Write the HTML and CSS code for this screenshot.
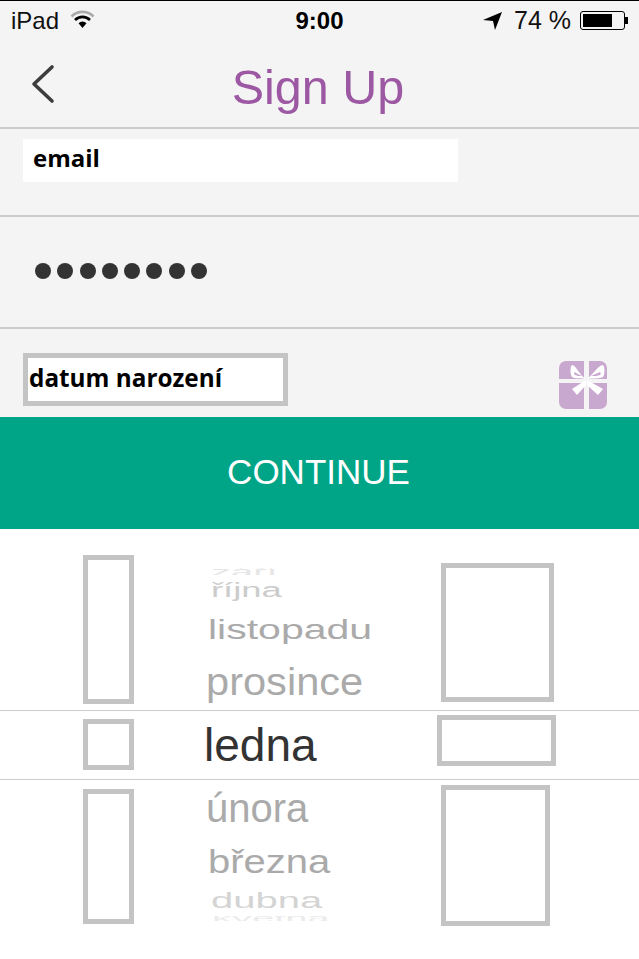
FILE: index.html
```html
<!DOCTYPE html>
<html lang="en">
<head>
  <meta charset="UTF-8">
  <meta name="viewport" content="width=device-width, initial-scale=1.0">
  <title>Sign Up</title>
  <link rel="stylesheet" href="styles.css">
</head>
<body>

  <div class="status-bar">
    <div class="status-left">
      <span>iPad</span>
      <svg class="wifi" width="25" height="19" viewBox="0 0 25 19">
        <path d="M1.5 6.5 A15.5 15.5 0 0 1 23.5 6.5" fill="none" stroke="#aaa" stroke-width="2.6"/>
        <path d="M5 10 A10.5 10.5 0 0 1 20 10" fill="none" stroke="#000" stroke-width="2.6"/>
        <path d="M8.5 13.2 A5.6 5.6 0 0 1 16.5 13.2 L12.5 18 Z" fill="#000"/>
      </svg>
    </div>
    <b class="status-time">9:00</b>
    <div class="status-right">
      <svg width="19" height="18" viewBox="0 0 19 18">
        <path d="M0 8 L19 0 L12 18 L10 9 Z" fill="#000"/>
      </svg>
      <span class="battery-text">74 %</span>
      <div class="battery"><div class="battery-fill"></div></div>
      <div class="battery-nub"></div>
    </div>
  </div>

  <header class="nav">
    <svg class="back" width="24" height="40" viewBox="0 0 24 40">
      <path d="M21 3 L3 20 L21 37" fill="none" stroke="#3d3d3d" stroke-width="3.6" stroke-linecap="round" stroke-linejoin="round"/>
    </svg>
    <h1>Sign Up</h1>
    <div></div>
  </header>

  <form>
    <div class="row row-email">
      <div class="field-email">email</div>
    </div>

    <div class="row row-password">
      <span class="dot"></span><span class="dot"></span><span class="dot"></span><span class="dot"></span>
      <span class="dot"></span><span class="dot"></span><span class="dot"></span><span class="dot"></span>
    </div>

    <div class="row-date">
      <div class="field-date">datum narození</div>
      <svg class="gift" width="48" height="48" viewBox="0 0 48 48">
        <rect width="48" height="48" rx="7" fill="#c9a8cf"/>
        <rect x="25" width="5" height="48" fill="#f4f4f4"/>
        <rect y="18" width="48" height="4" fill="#f4f4f4"/>
        <path d="M27 18 C21 15 17 4 13 4 C11 6 11 13 13 16 C16 18 22 17 27 18 Z M23 15 C20 14 18 12 15 11 C15 12 15 13 16 14 C18 15 20 15 23 15 Z" fill="#fff" fill-rule="evenodd"/>
        <path d="M28 18 C33 15 39 4 44 4 C46 6 46 13 44 16 C40 18 34 17 28 18 Z M32 15 C35 14 38 12 41 11 C42 12 42 13 41 14 C39 15 35 15 32 15 Z" fill="#fff" fill-rule="evenodd"/>
        <path d="M27 19 L13 28 L18 34 L27 24 Z M28 19 L44 28 L39 34 L28 24 Z" fill="#fff"/>
      </svg>
    </div>

    <button type="button" class="continue">CONTINUE</button>
  </form>

  <section class="picker">
    <div class="wheel wheel-top">
      <div class="box box-left"></div>
      <div class="months">
        <div class="month m-zari"><span>září</span></div>
        <div class="month m-rijna"><span>října</span></div>
        <div class="month m-listopadu"><span>listopadu</span></div>
        <div class="month m-prosince"><span>prosince</span></div>
      </div>
      <div class="box box-right"></div>
    </div>

    <div class="wheel wheel-mid">
      <div class="box box-left"></div>
      <div class="months">
        <div class="month m-ledna"><span>ledna</span></div>
      </div>
      <div class="box box-right"></div>
    </div>

    <div class="wheel wheel-bottom">
      <div class="box box-left"></div>
      <div class="months">
        <div class="month m-unora"><span>února</span></div>
        <div class="month m-brezna"><span>března</span></div>
        <div class="month m-dubna"><span>dubna</span></div>
        <div class="month m-kvetna"><span>května</span></div>
      </div>
      <div class="box box-right"></div>
    </div>
  </section>

</body>
</html>
```

FILE: styles.css
```css
body {
  margin: 0;
  height: 959px;
  overflow: hidden;
  background-color: #f4f4f4;
  font-family: "Liberation Sans", Arial, sans-serif;
}

.status-bar {
  box-sizing: border-box;
  height: 40px;
  padding: 0 11px;
  border-top: 1px solid #000;
  display: grid;
  grid-template-columns: 1fr auto 1fr;
  align-items: center;
  font-size: 24px;
  color: #111;
}

.status-left {
  display: flex;
  align-items: center;
  gap: 11px;
}

.wifi {
  margin-top: -3px;
}

.status-time {
  color: #000;
}

.status-right {
  display: flex;
  align-items: center;
  justify-content: flex-end;
}

.battery-text {
  margin: 0 9px 0 12px;
  font-size: 25px;
}

.battery {
  box-sizing: border-box;
  width: 45px;
  height: 19px;
  padding: 2px;
  border: 1px solid #000;
  border-radius: 3px;
}

.battery-fill {
  width: 29px;
  height: 100%;
  background-color: #000;
}

.battery-nub {
  width: 3px;
  height: 7px;
  background-color: #000;
}

.nav {
  box-sizing: border-box;
  height: 89px;
  padding: 0 0 0 31px;
  border-bottom: 2px solid #ccc;
  display: grid;
  grid-template-columns: 1fr auto 1fr;
  align-items: center;
}

.nav h1 {
  margin: 7px 0 0;
  font-weight: normal;
  font-size: 48.5px;
  color: #9c58a3;
  transform: translateX(-17px);
}

.row {
  box-sizing: border-box;
  border-bottom: 2px solid #ccc;
}

.row-email {
  height: 88px;
  padding: 10px 0 0 23px;
}

.field-email {
  box-sizing: border-box;
  width: 435px;
  height: 43px;
  padding-left: 10px;
  background-color: #fff;
  font-family: "Open Sans", sans-serif;
  font-weight: bold;
  font-size: 24px;
  line-height: 38px;
  color: #000;
}

.row-password {
  height: 112px;
  padding: 0 0 2px 35px;
  display: flex;
  align-items: center;
  gap: 6.3px;
}

.dot {
  width: 16px;
  height: 16px;
  border-radius: 50%;
  background-color: #333;
}

.row-date {
  box-sizing: border-box;
  height: 88px;
  padding: 24px 32px 0 23px;
  display: flex;
  justify-content: space-between;
  align-items: flex-start;
}

.field-date {
  box-sizing: border-box;
  width: 265px;
  height: 53px;
  padding-left: 1px;
  border: 5px solid #c4c4c4;
  background-color: #fff;
  font-family: "Open Sans", sans-serif;
  font-weight: bold;
  font-size: 24.3px;
  line-height: 40px;
  color: #000;
}

.gift {
  margin-top: 8px;
}

.continue {
  display: block;
  width: 100%;
  height: 112px;
  padding: 0 2px 2px 0;
  border: none;
  background-color: #00a587;
  color: #fff;
  font-family: "Liberation Sans", Arial, sans-serif;
  font-size: 35px;
}

.picker {
  height: 430px;
  background-color: #fff;
}

.wheel {
  display: grid;
  grid-template-columns: 83px 51px 303px 119px 1fr;
  grid-template-areas: ". left months right .";
  align-items: start;
}

.wheel-top {
  height: 181px;
}

.wheel-mid {
  height: 68px;
  border-top: 1px solid #ccc;
  border-bottom: 1px solid #ccc;
}

.box {
  box-sizing: border-box;
  border: 5px solid #c4c4c4;
}

.box-left {
  grid-area: left;
}

.box-right {
  grid-area: right;
}

.months {
  grid-area: months;
  display: flex;
  flex-direction: column;
  padding-left: 70px;
}

.wheel-top .box-left {
  height: 149px;
  margin-top: 26px;
}

.wheel-top .box-right {
  height: 139px;
  margin: 34px 2px 0 4px;
}

.wheel-mid .box-left {
  height: 51px;
  margin-top: 8px;
}

.wheel-mid .box-right {
  height: 51px;
  margin-top: 4px;
}

.wheel-bottom .box-left {
  height: 135px;
  margin-top: 9px;
}

.wheel-bottom .box-right {
  height: 141px;
  margin: 5px 6px 0 4px;
}

.month {
  overflow: hidden;
  white-space: nowrap;
  font-size: 40px;
  color: #aaa;
}

.month span {
  display: inline-block;
  transform-origin: left center;
}

/* months squash as they roll away from the middle */
.m-zari {
  height: 7px;
  margin: 39px 0 0 7px;
  line-height: 7px;
  color: #e6e6e6;
}

.m-zari span {
  transform: scaleY(.3);
}

.m-rijna {
  height: 24px;
  margin: 3px 0 0 7px;
  line-height: 24px;
  color: #ccc;
}

.m-rijna span {
  transform: scale(.91, .52);
}

.m-listopadu {
  height: 36px;
  margin: 9px 0 0 4px;
  line-height: 36px;
}

.m-listopadu span {
  transform: scale(1.025, .68);
}

.m-prosince {
  height: 44px;
  margin: 13px 0 0 2px;
  line-height: 44px;
}

.m-prosince span {
  transform: scale(1.04, .95);
}

.m-ledna {
  height: 68px;
  line-height: 68px;
  font-size: 46px;
  color: #333;
}

.m-unora {
  height: 44px;
  margin: 6px 0 0 2px;
  line-height: 44px;
}

.m-brezna {
  height: 34px;
  margin: 14px 0 0 4px;
  line-height: 34px;
}

.m-brezna span {
  transform: scaleY(.85);
}

.m-dubna {
  height: 20px;
  margin: 12px 0 0 7px;
  line-height: 20px;
  color: #d4d4d4;
}

.m-dubna span {
  transform: scaleY(.55);
}

.m-kvetna {
  height: 5px;
  margin: 6px 0 0 8px;
  line-height: 5px;
  color: #ebebeb;
}

.m-kvetna span {
  transform: scaleY(.25);
}
```
